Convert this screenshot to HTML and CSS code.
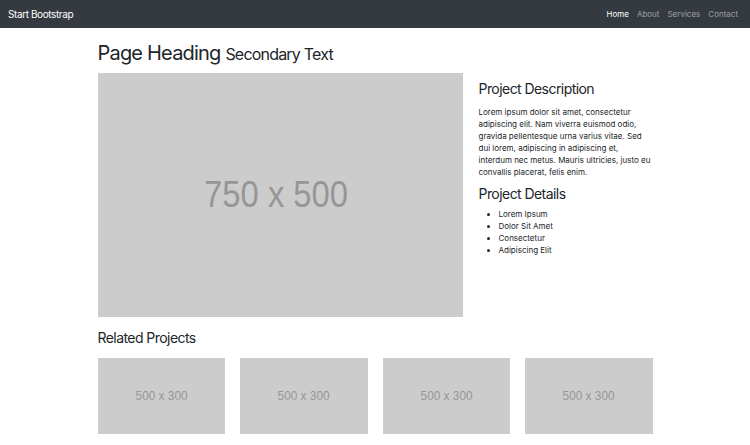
FILE: index.html
```html
<!DOCTYPE html>
<html lang="en">
<head>
<meta charset="utf-8">
<title>Portfolio Item</title>
<link rel="stylesheet" href="styles.css">
</head>
<body>
<nav class="navbar">
  <a class="brand" href="#">Start Bootstrap</a>
  <ul class="nav-links">
    <li><a class="active" href="#">Home</a></li>
    <li><a href="#">About</a></li>
    <li><a href="#">Services</a></li>
    <li><a href="#">Contact</a></li>
  </ul>
</nav>
<main class="container">
  <h1 class="page-title">Page Heading <small>Secondary Text</small></h1>
  <div class="item-row">
    <div class="placeholder main-img"><span>750 x 500</span></div>
    <div class="info">
      <h3 class="info-title">Project Description</h3>
      <p class="desc">Lorem ipsum dolor sit amet, consectetur adipiscing elit. Nam viverra euismod odio, gravida pellentesque urna varius vitae. Sed dui lorem, adipiscing in adipiscing et, interdum nec metus. Mauris ultricies, justo eu convallis placerat, felis enim.</p>
      <h3 class="info-title details-title">Project Details</h3>
      <ul class="details">
        <li>Lorem Ipsum</li>
        <li>Dolor Sit Amet</li>
        <li>Consectetur</li>
        <li>Adipiscing Elit</li>
      </ul>
    </div>
  </div>
  <h3 class="related-title">Related Projects</h3>
  <div class="related">
    <div class="placeholder thumb"><span>500 x 300</span></div>
    <div class="placeholder thumb"><span>500 x 300</span></div>
    <div class="placeholder thumb"><span>500 x 300</span></div>
    <div class="placeholder thumb"><span>500 x 300</span></div>
  </div>
</main>
</body>
</html>
```
FILE: styles.css
```css
* { box-sizing: border-box; }
html, body { margin: 0; padding: 0; }
body {
  font-family: Inter, "Liberation Sans", sans-serif;
  font-size: 8px;
  line-height: 1.5;
  color: #212529;
  background: #fff;
}
a { text-decoration: none; }

.navbar {
  height: 28px;
  background: #343a40;
  display: flex;
  align-items: center;
  justify-content: space-between;
  padding: 0 8px;
}
.brand {
  color: #fff;
  font-size: 10px;
  line-height: 1;
  letter-spacing: -0.04em;
}
.nav-links {
  display: flex;
  list-style: none;
  margin: 0;
  padding: 0;
}
.nav-links a {
  display: block;
  padding: 0 4px;
  color: rgba(255,255,255,0.5);
  font-size: 8px;
}
.nav-links a.active { color: #fff; }

.container {
  width: 555px;
  margin: 0 auto;
}
.page-title {
  font-size: 20px;
  font-weight: 400;
  line-height: 1.2;
  letter-spacing: -0.04em;
  margin: 13px 0 8px;
}
.page-title small {
  font-size: 16px;
}

.item-row {
  display: flex;
  gap: 16px;
}
.placeholder {
  background: #ccc;
  color: #969696;
  display: flex;
  align-items: center;
  justify-content: center;
  font-family: "Liberation Sans", Arial, sans-serif;
}
.placeholder span {
  display: inline-block;
  transform: scaleX(0.91);
  white-space: nowrap;
}
.main-img {
  width: 365px;
  height: 244px;
  flex: none;
  font-size: 36px;
  padding-right: 8px;
}
.info {
  flex: 1;
}
.info-title {
  font-size: 14px;
  font-weight: 400;
  line-height: 1.2;
  letter-spacing: -0.04em;
  margin: 8px 0;
}
.details-title { margin-bottom: 5px; }
.desc {
  margin: 0 0 8px;
}
.details {
  margin: 0;
  padding-left: 20px;
}

.related-title {
  font-size: 14px;
  font-weight: 400;
  line-height: 1.2;
  letter-spacing: -0.04em;
  margin: 13px 0 11px;
}
.related {
  display: grid;
  grid-template-columns: repeat(4, 1fr);
  gap: 15px;
}
.thumb {
  height: 76.5px;
  font-size: 13px;
}
```
